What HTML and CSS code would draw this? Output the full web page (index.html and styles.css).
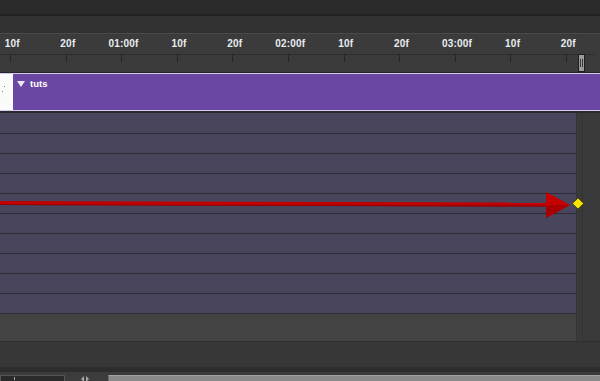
FILE: index.html
```html
<!DOCTYPE html>
<html lang="en">
<head>
<meta charset="UTF-8">
<meta name="viewport" content="width=device-width, initial-scale=1.0">
<title>Timeline</title>
<link rel="stylesheet" href="styles.css">
</head>
<body>
<div class="timeline">
    <div class="topbar"></div>
    <div class="subbar"></div>

    <div class="ruler">
        <div class="ticks">
            <div class="tick"><span>10f</span></div>
            <div class="tick"><span>20f</span></div>
            <div class="tick"><span>01:00f</span></div>
            <div class="tick"><span>10f</span></div>
            <div class="tick"><span>20f</span></div>
            <div class="tick"><span>02:00f</span></div>
            <div class="tick"><span>10f</span></div>
            <div class="tick"><span>20f</span></div>
            <div class="tick"><span>03:00f</span></div>
            <div class="tick"><span>10f</span></div>
            <div class="tick"><span>20f</span></div>
        </div>
        <div class="playhead"><i></i><i></i></div>
    </div>

    <div class="group">
        <div class="group-side"><i></i><i></i></div>
        <div class="group-bar">
            <span class="caret"></span>
            <span class="group-name">tuts</span>
        </div>
    </div>

    <div class="tracks">
        <div class="rows">
            <div class="row"></div>
            <div class="row"></div>
            <div class="row"></div>
            <div class="row"></div>
            <div class="row"></div>
            <div class="row"></div>
            <div class="row"></div>
            <div class="row"></div>
            <div class="row"></div>
            <div class="row"></div>
            <div class="row empty"></div>
        </div>
        <div class="end-col">
            <div class="end-line"></div>
        </div>
    </div>

    <div class="footer"></div>
    <div class="footer-edge"></div>

    <div class="bottombar">
        <div class="zoom-field"><i></i></div>
        <div class="zoom-btn"><i class="tri-left"></i><i class="tri-right"></i></div>
        <div class="scrollbar"></div>
    </div>

    <svg class="overlay" width="600" height="381" viewBox="0 0 600 381">
        <polygon points="0,201 548,202.5 548,206.5 0,205" fill="#c10000"/>
        <polygon points="0,204.2 548,205.7 548,206.5 0,205" fill="#850000"/>
        <polygon points="546,192 570,205 546,218" fill="#c60000"/>
        <polygon points="546,205 570,205 546,218" fill="#a80000"/>
        <polygon points="578,197.8 583.8,203.5 578,209.2 572.2,203.5" fill="#f6e400" stroke="#2a2a1a" stroke-width="0.9"/>
    </svg>
</div>
</body>
</html>
```

FILE: styles.css
```css
body {
    margin: 0;
    padding: 0;
    background-color: #2b2b2b;
    font-family: "Liberation Sans", Arial, sans-serif;
}

.timeline {
    position: relative;
    width: 600px;
    height: 381px;
    overflow: hidden;
    display: flex;
    flex-direction: column;
}

.timeline > div {
    flex-shrink: 0;
}

.topbar {
    height: 14px;
    background-color: #2b2b2b;
    border-bottom: 2px solid #212121;
}

.subbar {
    height: 17px;
    background-color: #313131;
    border-bottom: 1px solid #4a4a4a;
}

.ruler {
    position: relative;
    height: 38px;
    background-color: #3b3b3b;
    border-bottom: 1px solid #242424;
}

.ticks {
    display: flex;
    margin-left: -17px;
    height: 100%;
}

.tick {
    position: relative;
    flex: 0 0 55.6px;
    display: flex;
    justify-content: center;
    border-bottom: 1px solid #2e2e2e;
    height: 20px;
}

.tick span {
    margin-top: 4px;
    margin-left: 3px;
    font-size: 10px;
    font-weight: bold;
    color: #e9edf2;
    letter-spacing: 0.2px;
}

.tick::after {
    content: "";
    position: absolute;
    left: 27px;
    top: 20px;
    width: 1px;
    height: 8px;
    background-color: #262626;
}

.playhead {
    position: absolute;
    left: 578px;
    top: 20px;
    width: 5px;
    height: 16px;
    background-color: #9c9c9c;
    border: 1px solid #1e1e1e;
    display: flex;
    justify-content: center;
    align-items: center;
    gap: 1px;
}

.playhead i {
    width: 1px;
    height: 8px;
    background-color: #3a3a3a;
}

.group {
    display: flex;
    height: 37px;
    border-top: 1px solid #d6caee;
    border-bottom: 2px solid #2a2830;
}

.group-side {
    width: 13px;
    background-color: #fbfbfb;
    position: relative;
    border-bottom: 1px solid #d6caee;
}

.group-side i {
    position: absolute;
    width: 1px;
    height: 1px;
    background-color: #777;
}

.group-side i:first-child {
    left: 4px;
    top: 12px;
}

.group-side i:last-child {
    left: 2px;
    top: 17px;
}

.group-bar {
    flex: 1;
    background-color: #6a47a3;
    border-bottom: 1px solid #d6caee;
    display: flex;
    align-items: flex-start;
    padding: 4px 0 0 4px;
}

.caret {
    width: 0;
    height: 0;
    margin-top: 3px;
    border-left: 4px solid transparent;
    border-right: 4px solid transparent;
    border-top: 6px solid #ece8f6;
}

.group-name {
    margin-left: 5px;
    font-size: 9.5px;
    font-weight: bold;
    color: #ffffff;
}

.tracks {
    display: flex;
    height: 228px;
}

.rows {
    flex: 1;
    display: flex;
    flex-direction: column;
}

.row {
    height: 19px;
    background-color: #49455c;
    border-bottom: 1px solid #2d2b35;
}

.row:first-child {
    height: 20px;
}

.row.empty {
    height: 27px;
    background-color: #434343;
    border-bottom: none;
}

.end-col {
    width: 23px;
    background-color: #3a3a3a;
    border-left: 1px solid #353535;
    display: flex;
}

.end-line {
    margin-left: 5px;
    width: 1px;
    background-color: #333333;
}

.footer {
    height: 25px;
    background-color: #373737;
    border-top: 1px solid #2e2e2e;
}

.footer-edge {
    height: 5px;
    background-color: #2d2d2d;
    border-bottom: 3px solid #3c3c3c;
}

.bottombar {
    flex: 1 1 auto;
    min-height: 0;
    overflow: hidden;
    display: flex;
    background-color: #3c3c3c;
}

.zoom-field {
    width: 63px;
    background-color: #2a2a2a;
    border: 1px solid #555555;
    border-bottom: none;
    position: relative;
}

.zoom-field i {
    position: absolute;
    left: 13px;
    top: 1px;
    width: 1px;
    height: 3px;
    background-color: #aaaaaa;
}

.zoom-btn {
    width: 40px;
    display: flex;
    justify-content: center;
    align-items: flex-start;
    gap: 2px;
    padding-top: 1px;
}

.zoom-btn i {
    width: 0;
    height: 0;
    border-top: 3px solid transparent;
    border-bottom: 3px solid transparent;
}

.zoom-btn .tri-left {
    border-right: 3px solid #a8a8a8;
}

.zoom-btn .tri-right {
    border-left: 3px solid #a8a8a8;
}

.scrollbar {
    flex: 1;
    margin-left: 3px;
    background-color: #8a8a8a;
    border-top: 1px solid #a2a2a2;
    border-left: 1px solid #6a6a6a;
}

.overlay {
    position: absolute;
    left: 0;
    top: 0;
    pointer-events: none;
}
```
